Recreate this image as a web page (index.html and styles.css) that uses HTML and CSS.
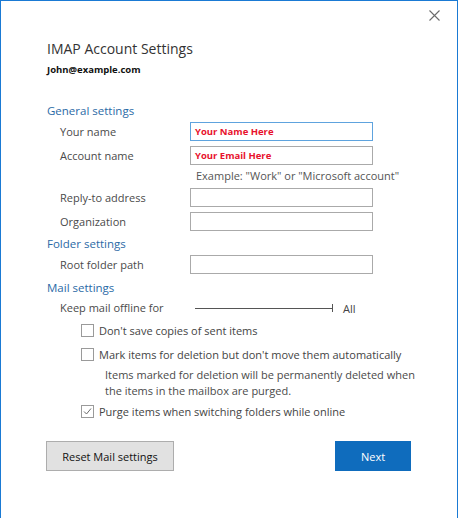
FILE: index.html
```html
<!DOCTYPE html>
<html lang="en">
<head>
<meta charset="utf-8">
<title>IMAP Account Settings</title>
<link rel="stylesheet" href="styles.css">
</head>
<body>
<div class="window">
  <div class="titlebar">
    <span class="close" aria-label="Close">
      <svg width="11" height="11" viewBox="0 0 11 11"><path d="M0.5 0.5 L10.5 10.5 M10.5 0.5 L0.5 10.5" stroke="#6b6b6b" stroke-width="1.1" fill="none"/></svg>
    </span>
  </div>
  <div class="content">
    <h1 class="title">IMAP Account Settings</h1>
    <div class="account">John@example.com</div>

    <div class="section first">General settings</div>
    <div class="form">
      <label class="lbl">Your name</label>
      <div class="field focused"><span class="val">Your Name Here</span></div>
      <label class="lbl">Account name</label>
      <div class="field"><span class="val">Your Email Here</span></div>
      <div class="hint">Example: "Work" or "Microsoft account"</div>
      <label class="lbl">Reply-to address</label>
      <div class="field"></div>
      <label class="lbl">Organization</label>
      <div class="field"></div>
    </div>

    <div class="section">Folder settings</div>
    <div class="form">
      <label class="lbl">Root folder path</label>
      <div class="field"></div>
    </div>

    <div class="section mail">Mail settings</div>
    <div class="offline">
      <span class="lbl">Keep mail offline for</span>
      <span class="slider"><span class="track"></span><span class="tick"></span></span>
      <span class="all">All</span>
    </div>
    <div class="checks">
      <div class="check"><span class="box"></span><span>Don't save copies of sent items</span></div>
      <div class="check"><span class="box"></span><span>Mark items for deletion but don't move them automatically</span></div>
      <div class="note">Items marked for deletion will be permanently deleted when the items in the mailbox are purged.</div>
      <div class="check"><span class="box checked"><svg width="11" height="11" viewBox="0 0 11 11"><path d="M2 5.5 L4.5 8 L9 2.5" stroke="#6a6a6a" stroke-width="1" fill="none"/></svg></span><span>Purge items when switching folders while online</span></div>
    </div>

    <div class="buttons">
      <button class="btn reset">Reset Mail settings</button>
      <button class="btn next">Next</button>
    </div>
  </div>
</div>
</body>
</html>
```

FILE: styles.css
```css
html, body {
  margin: 0;
  padding: 0;
  background: #ffffff;
}

.window {
  box-sizing: border-box;
  width: 458px;
  height: 518px;
  border-top: 1px solid #1a7ad4;
  border-left: 1px solid #1a7ad4;
  border-right: 1px solid #1a7ad4;
  background: #ffffff;
  font-family: "Open Sans", "Noto Sans", sans-serif;
  font-size: 11px;
  color: #444444;
}

.titlebar {
  height: 29px;
  display: flex;
  justify-content: flex-end;
  align-items: center;
  padding-right: 17px;
}

.close {
  display: flex;
  width: 11px;
  height: 11px;
}

.content {
  padding-left: 46px;
  padding-right: 20px;
}

.title {
  margin: 9px 0 0 0;
  font-size: 14px;
  font-weight: 400;
  line-height: 20px;
  color: #333333;
}

.account {
  margin-top: 3px;
  font-size: 9.5px;
  font-weight: 700;
  line-height: 16px;
  color: #111111;
}

.section {
  margin-top: 5px;
  line-height: 16px;
  color: #2b6aa6;
  font-size: 11.5px;
}

.section.first {
  margin-top: 25px;
}

.section.mail {
  margin-top: 6px;
}

.form {
  display: grid;
  grid-template-columns: 130px 183px;
  row-gap: 5px;
  padding-left: 13px;
  margin-top: 3px;
  align-items: center;
}

.lbl {
  line-height: 16px;
  color: #4a4a4a;
}

.field {
  box-sizing: border-box;
  height: 19px;
  border: 1px solid #aaaaaa;
  background: #ffffff;
  display: flex;
  align-items: center;
  padding-left: 4px;
}

.field.focused {
  border-color: #5ea3de;
}

.val {
  color: #e8112d;
  font-weight: 700;
  font-size: 9.5px;
}

.hint {
  grid-column: 2 / span 1;
  white-space: nowrap;
  padding-left: 6px;
  line-height: 16px;
  margin: -2px 0 -1px 0;
  color: #555555;
}

.offline {
  display: flex;
  align-items: center;
  padding-left: 13px;
  margin-top: 4px;
  height: 16px;
}

.offline .lbl {
  width: 135px;
}

.slider {
  display: flex;
  align-items: center;
  width: 138px;
  height: 10px;
}

.track {
  display: block;
  width: 137px;
  height: 1px;
  background: #555555;
}

.tick {
  display: block;
  width: 1px;
  height: 8px;
  background: #555555;
}

.all {
  margin-left: 10px;
  color: #444444;
}

.checks {
  padding-left: 34px;
  margin-top: 6px;
}

.check {
  display: flex;
  align-items: center;
  height: 16px;
  margin-bottom: 8px;
}

.box {
  box-sizing: border-box;
  width: 13px;
  height: 13px;
  border: 1px solid #9a9a9a;
  margin-right: 5px;
  display: flex;
  align-items: center;
  justify-content: center;
  flex: none;
}

.note {
  padding-left: 24px;
  width: 312px;
  line-height: 16px;
  margin-top: -3px;
  margin-bottom: 4px;
  color: #4a4a4a;
}

.buttons {
  display: flex;
  justify-content: space-between;
  width: 365px;
  margin-top: 22px;
  margin-left: -1px;
}

.btn {
  box-sizing: border-box;
  height: 30px;
  font-family: "Open Sans", "Noto Sans", sans-serif;
  font-size: 11px;
  padding: 0;
  cursor: pointer;
}

.reset {
  width: 128px;
  background: #e1e1e1;
  border: 1px solid #adadad;
  color: #111111;
}

.next {
  width: 76px;
  background: #0f6cbd;
  border: 1px solid #0f6cbd;
  color: #ffffff;
}
```
